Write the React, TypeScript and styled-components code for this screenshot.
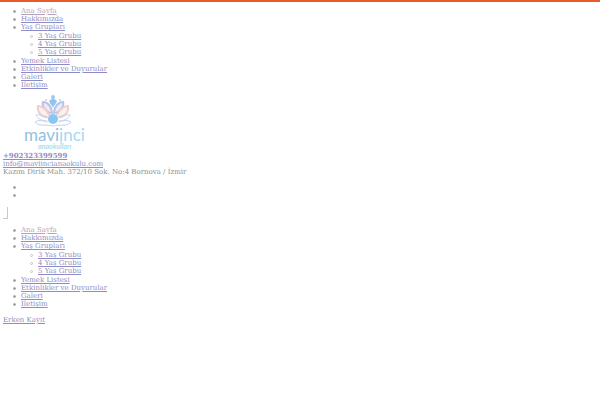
import React from 'react';
import styled, { createGlobalStyle } from 'styled-components';

const GlobalStyle = createGlobalStyle`
  body {
    margin: 0;
    background: #fff;
    color: #8c8c8c;
    font: 7px/8px "DejaVu Serif", serif;
  }
`;

const Page = styled.div`
  border-top: 2px solid #e65a2c;
  padding: 5px 3px;
`;

const List = styled.ul`
  margin: 0;
  padding: 0 0 0 18px;
  list-style: none;
`;

const SubList = styled(List)`
  padding: 1px 0 1px 17px;
`;

const Item = styled.li<{ $hollow?: boolean }>`
  min-height: 8px;

  &::before {
    content: '';
    float: left;
    box-sizing: border-box;
    width: 3px;
    height: 3px;
    margin: 3px 0 0 -8px;
    border: 1px solid ${(p) => (p.$hollow ? '#c4c4c4' : '#a8a8a8')};
    border-radius: 50%;
    background: ${(p) => (p.$hollow ? 'transparent' : '#8c8c8c')};
  }
`;

const Link = styled.a<{ $active?: boolean; $bold?: boolean }>`
  color: ${(p) => (p.$active ? '#b5a3bd' : '#8f8bc6')};
  font-weight: ${(p) => (p.$bold ? 700 : 400)};
  text-decoration: underline;
`;

const LogoLink = styled.a`
  display: block;
  width: 102px;
  margin: 4px 0 0;
`;

const Logo = styled.svg`
  display: block;
  width: 100%;
`;

const Contact = styled.address`
  font-style: normal;
  padding-bottom: 7px;
`;

const Line = styled.div``;

const Toggle = styled.button`
  display: block;
  width: 5px;
  height: 12px;
  margin: 8px 0 7px;
  padding: 0;
  background: #fff;
  border: solid #c9c9c9;
  border-width: 0 1px 1px 0;
`;

const Signup = styled.div`
  padding-top: 8px;
`;

const items: { label: string; children?: string[] }[] = [
  { label: 'Ana Sayfa' },
  { label: 'Hakkımızda' },
  { label: 'Yaş Grupları', children: ['3 Yaş Grubu', '4 Yaş Grubu', '5 Yaş Grubu'] },
  { label: 'Yemek Listesi' },
  { label: 'Etkinlikler ve Duyurular' },
  { label: 'Galeri' },
  { label: 'İletişim' },
];

function Menu({ label }: { label: string }) {
  return (
    <nav aria-label={label}>
      <List>
        {items.map((item, i) => (
          <Item key={item.label}>
            <Link href="#" $active={i === 0}>{item.label}</Link>
            {item.children && (
              <SubList>
                {item.children.map((c) => (
                  <Item key={c} $hollow><Link href="#">{c}</Link></Item>
                ))}
              </SubList>
            )}
          </Item>
        ))}
      </List>
    </nav>
  );
}

function Brand() {
  return (
    <Logo viewBox="0 0 102 59" role="img" aria-label="maviinci anaokulları">
      <g fill="none" strokeLinecap="round" strokeWidth="2">
        <path d="M47 20C44 19 38 13 40 9c5 0 9 5 9 11" stroke="#c3bfe2" fill="#edeaf7" />
        <path d="M53 20c3-1 9-7 7-11-5 0-9 5-9 11" stroke="#b4c5ea" fill="#e8eef9" />
        <path d="M44 24c-6 0-10-5-9-11 4 0 9 4 11 9" stroke="#efcfcf" fill="#fbf1ef" />
        <path d="M56 24c6 0 10-5 9-11-4 0-9 4-11 9" stroke="#efcfcf" fill="#fbf1ef" />
        <path d="M44 28c-4 0-10-2-11-6 4-1 9 1 11 3" stroke="#c9d3ef" strokeWidth="1" />
        <path d="M56 28c4 0 10-2 11-6-4-1-9 1-11 3" stroke="#c9d3ef" strokeWidth="1" />
        <path d="M44 29c-5-2-9-2-12 0 4 5 11 2 18 4 7-2 14 1 18-4-3-2-7-2-12 0" stroke="#bdd3ef" strokeWidth="1" />
      </g>
      <path d="M50 5l4 3c-1 3-3 4-4 7-1-3-3-4-4-7z" fill="#8fc5ee" />
      <circle cx="50" cy="4" r="2" fill="#9fcaf0" />
      <circle cx="43" cy="7" r="1" fill="#b7d2f1" />
      <circle cx="57" cy="7" r="1" fill="#b7d2f1" />
      <circle cx="50" cy="26" r="5" fill="#8ac6f2" />
      <path d="M58 47v4" stroke="#a4d8f5" />
      <text x="21" y="48" fontFamily="Lato, sans-serif" fontSize="17" fill="#92c0e2">
        mavi<tspan fill="#a4d8f5">inci</tspan>
      </text>
      <text x="35" y="56" fontFamily="Lato, sans-serif" fontSize="7" fontStyle="italic" fontWeight="700" fill="#a9dfeb">
        anaokulları
      </text>
    </Logo>
  );
}

export default function App() {
  return (
    <>
      <GlobalStyle />
      <Page>
        <Menu label="Mobil menü" />
        <LogoLink href="#"><Brand /></LogoLink>
        <Contact>
          <Line><Link href="tel:+902323399599" $bold>+902323399599</Link></Line>
          <Line><Link href="mailto:info@maviincianaokulu.com">info@maviincianaokulu.com</Link></Line>
          <Line>Kazım Dirik Mah. 372/10 Sok. No:4 Bornova / İzmir</Line>
        </Contact>
        <List>
          <Item />
          <Item />
        </List>
        <Toggle type="button" aria-label="Menü" />
        <Menu label="Ana menü" />
        <Signup><Link href="#">Erken Kayıt</Link></Signup>
      </Page>
    </>
  );
}
